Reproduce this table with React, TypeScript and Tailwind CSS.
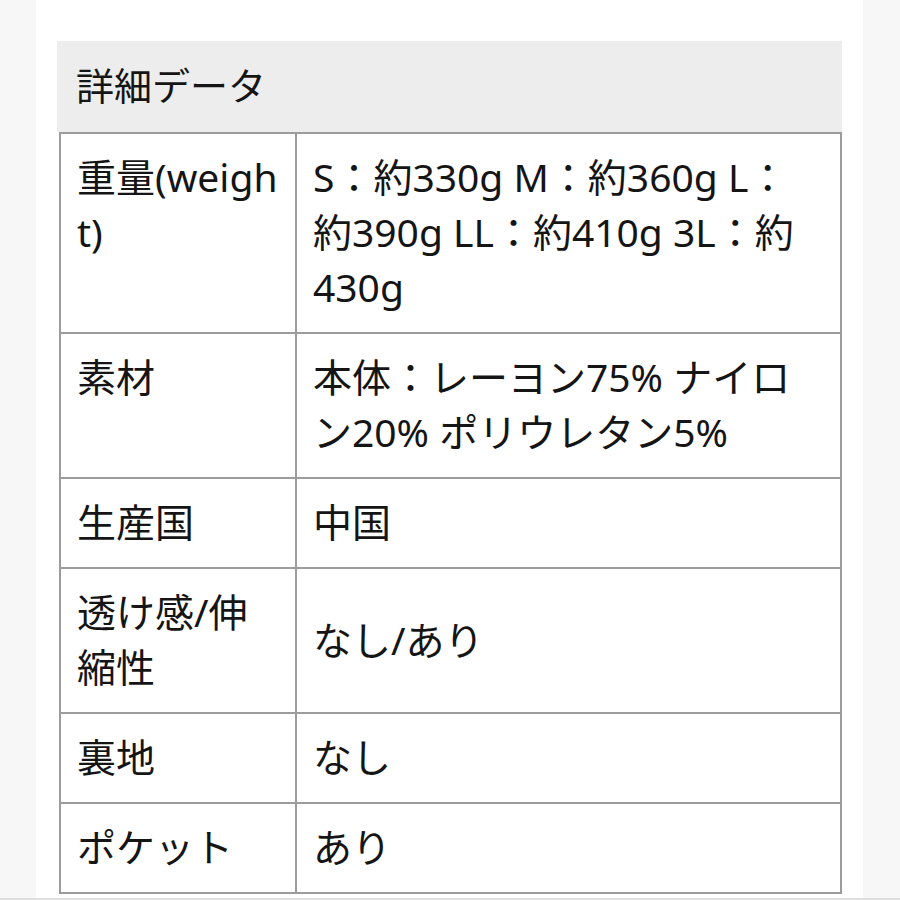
import React from "react";

const rows: { label: string; value: string }[] = [
  { label: "重量(weight)", value: "S：約330g M：約360g L：約390g LL：約410g 3L：約430g" },
  { label: "素材", value: "本体：レーヨン75% ナイロン20% ポリウレタン5%" },
  { label: "生産国", value: "中国" },
  { label: "透け感/伸縮性", value: "なし/あり" },
  { label: "裏地", value: "なし" },
  { label: "ポケット", value: "あり" },
];

export default function App() {
  return (
    <div
      className="w-[900px] h-[900px] overflow-hidden bg-[#f7f7f7] text-[#151515] flex flex-col"
      style={{ fontFamily: '"Noto Sans", "Noto Sans CJK JP", sans-serif' }}
    >
      <div className="flex flex-1">
        <div className="ml-[36px] w-[827px] bg-white pt-[41px] pl-[21px] pr-[21px]">
          <div className="h-[91px] bg-[#ededed] pl-[19px] pt-[17px] text-[38px] leading-[55px]">
            詳細データ
          </div>
          <table className="ml-[2px] w-[783px] border-collapse border-2 border-[#9c9c9c] text-[39px] leading-[55px]">
            <tbody>
              {rows.map((r) => (
                <tr key={r.label}>
                  <td className="w-[236px] border-2 border-[#9c9c9c] pl-[16px] pr-[14px] pt-[15px] pb-[18px] align-top break-all">
                    {r.label}
                  </td>
                  <td className="border-2 border-[#9c9c9c] pl-[16px] pr-[20px] pt-[15px] pb-[18px] align-middle">
                    {r.value}
                  </td>
                </tr>
              ))}
            </tbody>
          </table>
        </div>
      </div>
      <div className="h-[2px] bg-[#dedede]" />
    </div>
  );
}
